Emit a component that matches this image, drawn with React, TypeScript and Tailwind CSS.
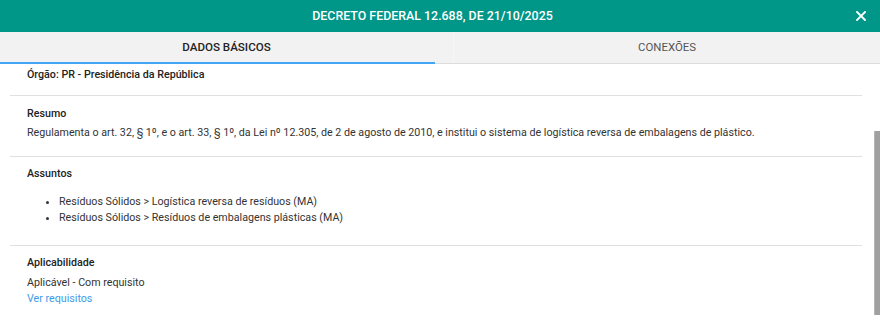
import { useState } from "react";

const assuntos = [
  "Resíduos Sólidos > Logística reversa de resíduos (MA)",
  "Resíduos Sólidos > Resíduos de embalagens plásticas (MA)",
];

export default function App() {
  const [tab, setTab] = useState(0);

  return (
    <div className="w-[880px] h-[331px] flex flex-col bg-white overflow-hidden font-['Roboto',sans-serif] text-[10.7px] text-[#333]">
      {/* Header */}
      <div className="h-[32px] shrink-0 flex items-center bg-[#009688] pl-[14px] pr-[9px]">
        <div className="flex-1 text-center text-white text-[12.4px] font-medium leading-none">
          DECRETO FEDERAL 12.688, DE 21/10/2025
        </div>
        <button className="w-[20px] h-[20px] flex items-center justify-center">
          <svg width="10" height="10" viewBox="0 0 10 10">
            <path d="M1 1L9 9M9 1L1 9" stroke="white" strokeWidth="1.9" strokeLinecap="square" />
          </svg>
        </button>
      </div>

      {/* Tabs */}
      <div className="h-[32px] shrink-0 flex bg-[#f2f2f2] border-b border-[#dcdcdc]">
        <button
          onClick={() => setTab(0)}
          className="w-[454px] relative flex items-center justify-center text-[11.6px] font-medium text-[#222] border-r border-[#f6f6f6]"
        >
          DADOS BÁSICOS
          {tab === 0 && <span className="absolute left-0 bottom-[-1px] w-[435px] h-[2px] bg-[#42a5f5]" />}
        </button>
        <button
          onClick={() => setTab(1)}
          className="flex-1 flex items-center justify-center text-[11.4px] text-[#555]"
        >
          CONEXÕES
        </button>
      </div>

      {/* Body */}
      <div className="flex-1 flex min-h-0">
        <div className="flex-1 pl-[10px] pr-[12px] leading-[16px]">
          <div className="pl-[17px] pt-[3px] pb-[12px] font-medium text-[#222]">
            Órgão: PR - Presidência da República
          </div>

          <div className="border-t border-[#e0e0e0] pl-[17px] pt-[10px] pb-[15px]">
            <div className="font-medium text-[#222]">Resumo</div>
            <div className="mt-[3px]">
              Regulamenta o art. 32, § 1º, e o art. 33, § 1º, da Lei nº 12.305, de 2 de agosto de 2010, e institui o sistema de logística reversa de embalagens de plástico.
            </div>
          </div>

          <div className="border-t border-[#e0e0e0] pl-[17px] pt-[9px] pb-[19px]">
            <div className="font-medium text-[#222]">Assuntos</div>
            <ul className="mt-[12px] list-disc pl-[32px]">
              {assuntos.map((a) => (
                <li key={a}>{a}</li>
              ))}
            </ul>
          </div>

          <div className="border-t border-[#e0e0e0] pl-[17px] pt-[9px]">
            <div className="font-medium text-[#222]">Aplicabilidade</div>
            <div className="mt-[4px]">Aplicável - Com requisito</div>
            <a className="text-[#3d9be9] cursor-pointer">Ver requisitos</a>
          </div>
        </div>

        {/* Scrollbar */}
        <div className="w-[6px] shrink-0">
          <div className="mt-[67px] h-[184px] bg-[#a0a0a0] border-l border-[#b5b5b5]" />
        </div>
      </div>
    </div>
  );
}
